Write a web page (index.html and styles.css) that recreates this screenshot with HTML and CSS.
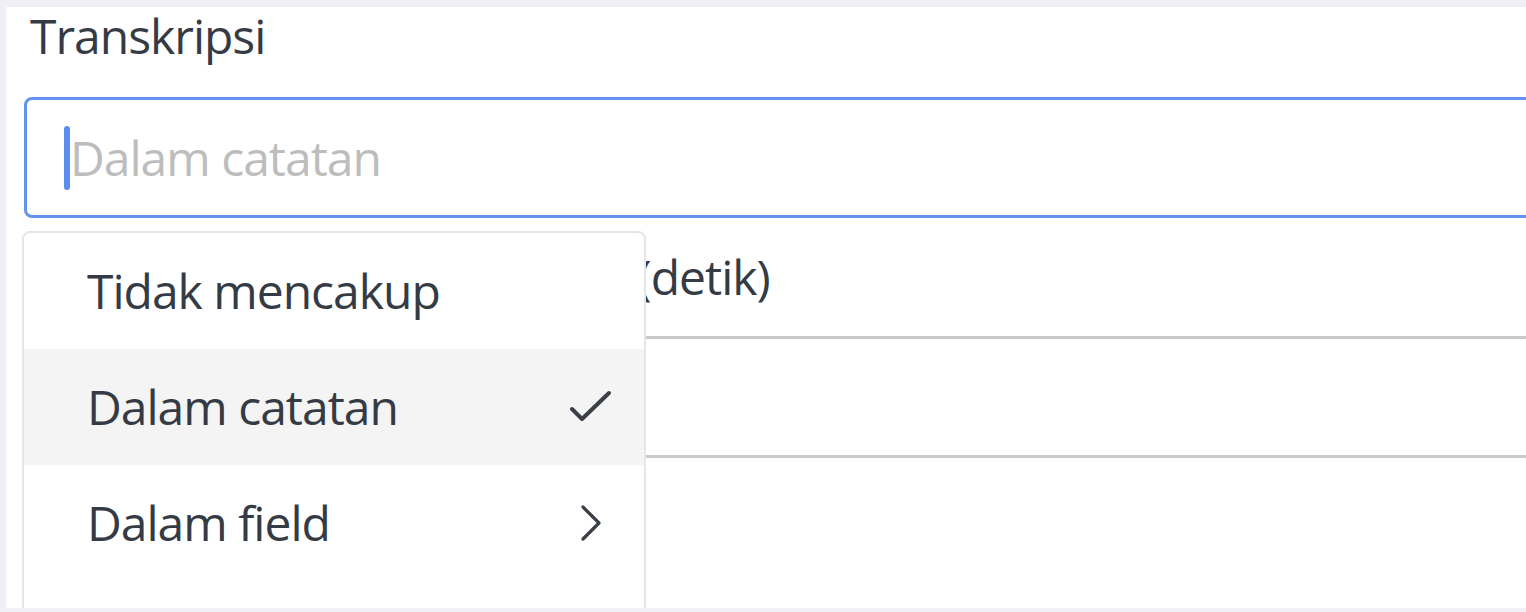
FILE: index.html
```html
<!DOCTYPE html>
<html lang="id">
<head>
<meta charset="utf-8">
<title>Transkripsi</title>
<link rel="stylesheet" href="styles.css">
</head>
<body>
<div class="panel">
  <div class="label">Transkripsi</div>
  <div class="input focused">
    <span class="caret"></span>
    <span class="placeholder">Dalam catatan</span>
  </div>
  <div class="row">
    <span class="row-label">Durasi maksimum rekaman (detik)</span>
  </div>
  <div class="row"></div>

  <div class="menu">
    <div class="item">
      <span>Tidak mencakup</span>
    </div>
    <div class="item selected">
      <span>Dalam catatan</span>
      <svg class="icon" viewBox="0 0 44 44" width="44" height="44"><polyline points="3,24 13,34 40,8" fill="none" stroke="#3a3f48" stroke-width="4" stroke-linecap="round" stroke-linejoin="round"/></svg>
    </div>
    <div class="item">
      <span>Dalam field</span>
      <svg class="icon" viewBox="0 0 44 44" width="44" height="44"><polyline points="14,6 30,22 14,38" fill="none" stroke="#3a3f48" stroke-width="3.2" stroke-linecap="round" stroke-linejoin="round"/></svg>
    </div>
  </div>
</div>
</body>
</html>
```
FILE: styles.css
```css
html, body {
  margin: 0;
  padding: 0;
  height: 612px;
  overflow: hidden;
  background: #f0eff8;
}

body {
  font-family: "Open Sans", "Noto Sans", sans-serif;
  font-size: 48px;
  letter-spacing: -1px;
  color: #353b45;
}

.panel {
  position: relative;
  margin: 0 0 0 6px;
  height: 608px;
  border-top: 7px solid #f0eff8;
  background: #ffffff;
  overflow-x: clip;
  overflow-y: visible;
  padding-left: 18px;
  box-sizing: border-box;
}

.label {
  margin-top: -4px;
  height: 66px;
  line-height: 66px;
  padding-left: 6px;
}

.input {
  margin-top: 28px;
  margin-right: -40px;
  height: 121px;
  box-sizing: border-box;
  border: 3px solid #6393f0;
  border-radius: 8px;
  display: flex;
  align-items: center;
  padding-left: 37px;
}

.caret {
  width: 6px;
  height: 64px;
  border-radius: 3px;
  background: #5b8def;
}

.placeholder {
  color: #bdbdbd;
  line-height: 66px;
}

.row {
  height: 121px;
  margin-right: -40px;
  box-sizing: border-box;
  border-bottom: 3px solid #cacaca;
  display: flex;
  align-items: center;
  padding-left: 6px;
  line-height: 66px;
}

.row + .row {
  height: 119px;
}

.menu {
  position: absolute;
  left: 16px;
  top: 224px;
  width: 624px;
  height: 377px;
  box-sizing: border-box;
  background: #ffffff;
  border: 2px solid #e6e6ea;
  border-bottom: 0;
  border-radius: 8px 8px 0 0;
  overflow: hidden;
}

.item {
  height: 116px;
  display: flex;
  align-items: center;
  justify-content: space-between;
  padding: 0 31px 0 63px;
  line-height: 66px;
}

.item.selected {
  background: #f4f4f4;
}

.icon {
  display: block;
  flex: none;
}
```
